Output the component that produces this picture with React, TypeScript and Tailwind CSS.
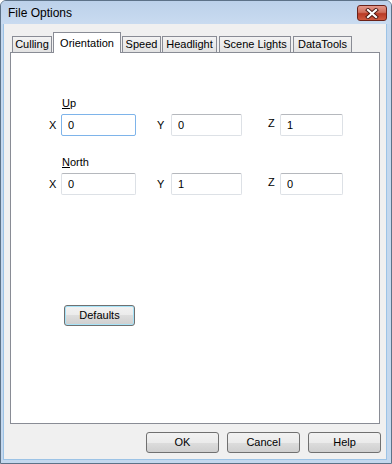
import React from 'react';

const tabs = [
  { label: 'Culling', cls: 'w-[40px] ml-[2px]' },
  { label: 'Orientation', cls: 'w-[68px] ml-[1px]', active: true },
  { label: 'Speed', cls: 'w-[39px] ml-[1px]' },
  { label: 'Headlight', cls: 'w-[55px] ml-[1px]' },
  { label: 'Scene Lights', cls: 'w-[72px] ml-[2px]' },
  { label: 'DataTools', cls: 'w-[59px] ml-[2px]' },
];

const btn =
  'h-[21px] rounded-[3px] border border-[#707070] bg-[linear-gradient(#f2f2f2,#ebebeb_50%,#dddddd_50%,#cfcfcf)] text-[11px] text-black flex items-center justify-center';

function Field({ value, focused, w }: { value: string; focused?: boolean; w: string }) {
  return (
    <input
      readOnly
      defaultValue={value}
      className={`${w} h-[22px] rounded-[2px] border bg-white pl-[6px] text-[11px] text-black outline-none ${
        focused ? 'border-[#7eb4ea]' : 'border-[#dde1e6] border-t-[#b5b8bd]'
      }`}
    />
  );
}

function VectorRow({ vals, focusFirst }: { vals: string[]; focusFirst?: boolean }) {
  return (
    <div className="flex items-center h-[22px] pl-[34px]">
      <span className="w-[16px] pl-[4px]">X</span>
      <Field value={vals[0]} focused={focusFirst} w="w-[75px]" />
      <span className="w-[35px] pl-[21px]">Y</span>
      <Field value={vals[1]} w="w-[71px]" />
      <span className="w-[38px] pl-[26px] -mt-[3px]">Z</span>
      <Field value={vals[2]} w="w-[63px]" />
    </div>
  );
}

export default function App() {
  return (
    <div className="w-[392px] h-[464px] flex flex-col overflow-hidden rounded-t-[6px] border border-[#5d7288] bg-[#c4d8ee] font-['Liberation_Sans',Arial,sans-serif] text-[11px] leading-[13px] text-black">
      {/* Title bar */}
      <div className="h-[23px] flex items-start justify-between pl-[7px] pr-[4px] bg-[linear-gradient(#bcd1ea,#c9dbf0)]">
        <span className="mt-[5px] text-[12px] leading-[14px]">File Options</span>
        <div className="mt-[4px] w-[30px] h-[16px] rounded-[3px] border border-[#6b2219] bg-[linear-gradient(#e3988a,#d06f5c_45%,#b93a25_55%,#cf5a40)] flex items-center justify-center">
          <svg width="14" height="11" viewBox="0 0 14 11">
            <path d="M3 2 L11 9 M11 2 L3 9" stroke="#4a1610" strokeWidth="4" strokeLinecap="square" />
            <path d="M3 2 L11 9 M11 2 L3 9" stroke="#ffffff" strokeWidth="2.2" strokeLinecap="square" />
          </svg>
        </div>
      </div>

      {/* Client area */}
      <div className="flex-1 ml-[2px] mr-[4px] mb-[3px] bg-[#f0f0f0] border-l border-b border-r border-[#9cc3e6] px-[6px] pt-[8px] flex flex-col">
        {/* Tabs */}
        <div className="flex items-end h-[20px]">
          {tabs.map((t) =>
            t.active ? (
              <div
                key={t.label}
                className={`${t.cls} relative z-10 -mb-px h-[21px] border border-b-0 border-[#898c95] bg-white flex items-center justify-center`}
              >
                {t.label}
              </div>
            ) : (
              <div
                key={t.label}
                className={`${t.cls} h-[16px] border border-b-0 border-[#898c95] bg-[linear-gradient(#f3f3f3,#e3e3e3)] flex items-center justify-center`}
              >
                {t.label}
              </div>
            )
          )}
        </div>

        {/* Panel */}
        <div className="h-[372px] border border-[#898c95] bg-white flex flex-col">
          <div className="mt-[44px] pl-[51px]">
            <span className="underline">U</span>p
          </div>
          <div className="mt-[4px]">
            <VectorRow vals={['0', '0', '1']} focusFirst />
          </div>
          <div className="mt-[20px] pl-[51px]">
            <span className="underline">N</span>orth
          </div>
          <div className="mt-[4px]">
            <VectorRow vals={['0', '1', '0']} />
          </div>
          <button className={`${btn} mt-[110px] ml-[53px] w-[71px] border-[#3c7fb1] shadow-[inset_0_0_0_1px_#a6e3f8]`}>
            Defaults
          </button>
        </div>

        {/* Buttons */}
        <div className="mt-[8px] flex justify-end gap-[8px] -mr-px">
          <button className={`${btn} w-[73px]`}>OK</button>
          <button className={`${btn} w-[73px]`}>Cancel</button>
          <button className={`${btn} w-[73px]`}>Help</button>
        </div>
      </div>
    </div>
  );
}
